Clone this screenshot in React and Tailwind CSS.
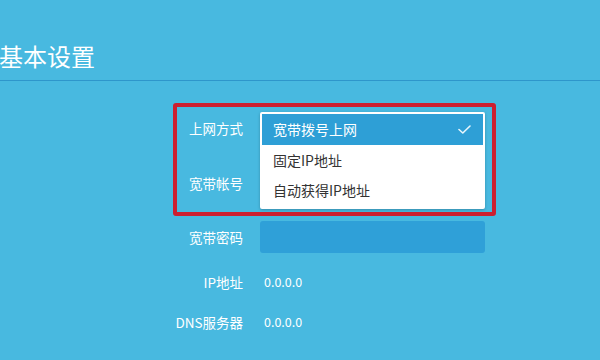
export default function App() {
  const font = { fontFamily: '"Noto Sans CJK SC", "Noto Sans", sans-serif' };
  return (
    <div className="relative w-[600px] h-[360px] overflow-hidden bg-[#48b9e0] text-white" style={font}>
      <div className="h-[80px] flex items-end pb-[9px] pl-0">
        <h1 className="text-[24px] leading-[30px] -ml-[1px] text-white">基本设置</h1>
      </div>
      <div className="h-px bg-[#2e96cb]" />
      <div className="flex flex-col text-[13.5px]">
        <div className="flex items-center h-[32px] mt-[31px]">
          <div className="w-[243px] text-right">上网方式</div>
          <div className="ml-[17px] w-[225px]" />
        </div>
        <div className="flex items-center h-[32px] mt-[23px]">
          <div className="w-[243px] text-right">宽带帐号</div>
          <div className="ml-[17px] w-[225px]" />
        </div>
        <div className="flex items-center h-[32px] mt-[22px]">
          <div className="w-[243px] text-right">宽带密码</div>
          <div className="ml-[17px] w-[225px] h-[32px] rounded-[3px] bg-[#2fa0d8]" />
        </div>
        <div className="flex items-center h-[32px] mt-[13px]">
          <div className="w-[243px] text-right">IP地址</div>
          <div className="ml-[21px] text-[12.5px]">0.0.0.0</div>
        </div>
        <div className="flex items-center h-[32px] mt-[8px]">
          <div className="w-[243px] text-right">DNS服务器</div>
          <div className="ml-[21px] text-[12.5px]">0.0.0.0</div>
        </div>
      </div>

      <div className="absolute left-[260px] top-[112px] w-[225px] h-[97px] bg-white rounded-[2px] p-[2px] shadow-[0_1px_3px_rgba(0,0,0,0.25)] text-[14px]">
        <div className="flex items-center justify-between h-[31px] bg-[#2e9fd6] text-white pl-[11px] pr-[12px]">
          <span>宽带拨号上网</span>
          <svg width="13" height="9" viewBox="0 0 13 9" fill="none">
            <path d="M1 4.5 L4.8 8 L12 1" stroke="#e8f6fc" strokeWidth="1.6" strokeLinecap="round" strokeLinejoin="round" />
          </svg>
        </div>
        <div className="flex items-center h-[30px] pl-[11px] text-[#333]">固定IP地址</div>
        <div className="flex items-center h-[30px] pl-[11px] text-[#333]">自动获得IP地址</div>
      </div>

      <div className="absolute left-[173px] top-[103px] w-[323px] h-[113px] border-[4px] border-[#cc1f30] rounded-[3px]" />
    </div>
  );
}
